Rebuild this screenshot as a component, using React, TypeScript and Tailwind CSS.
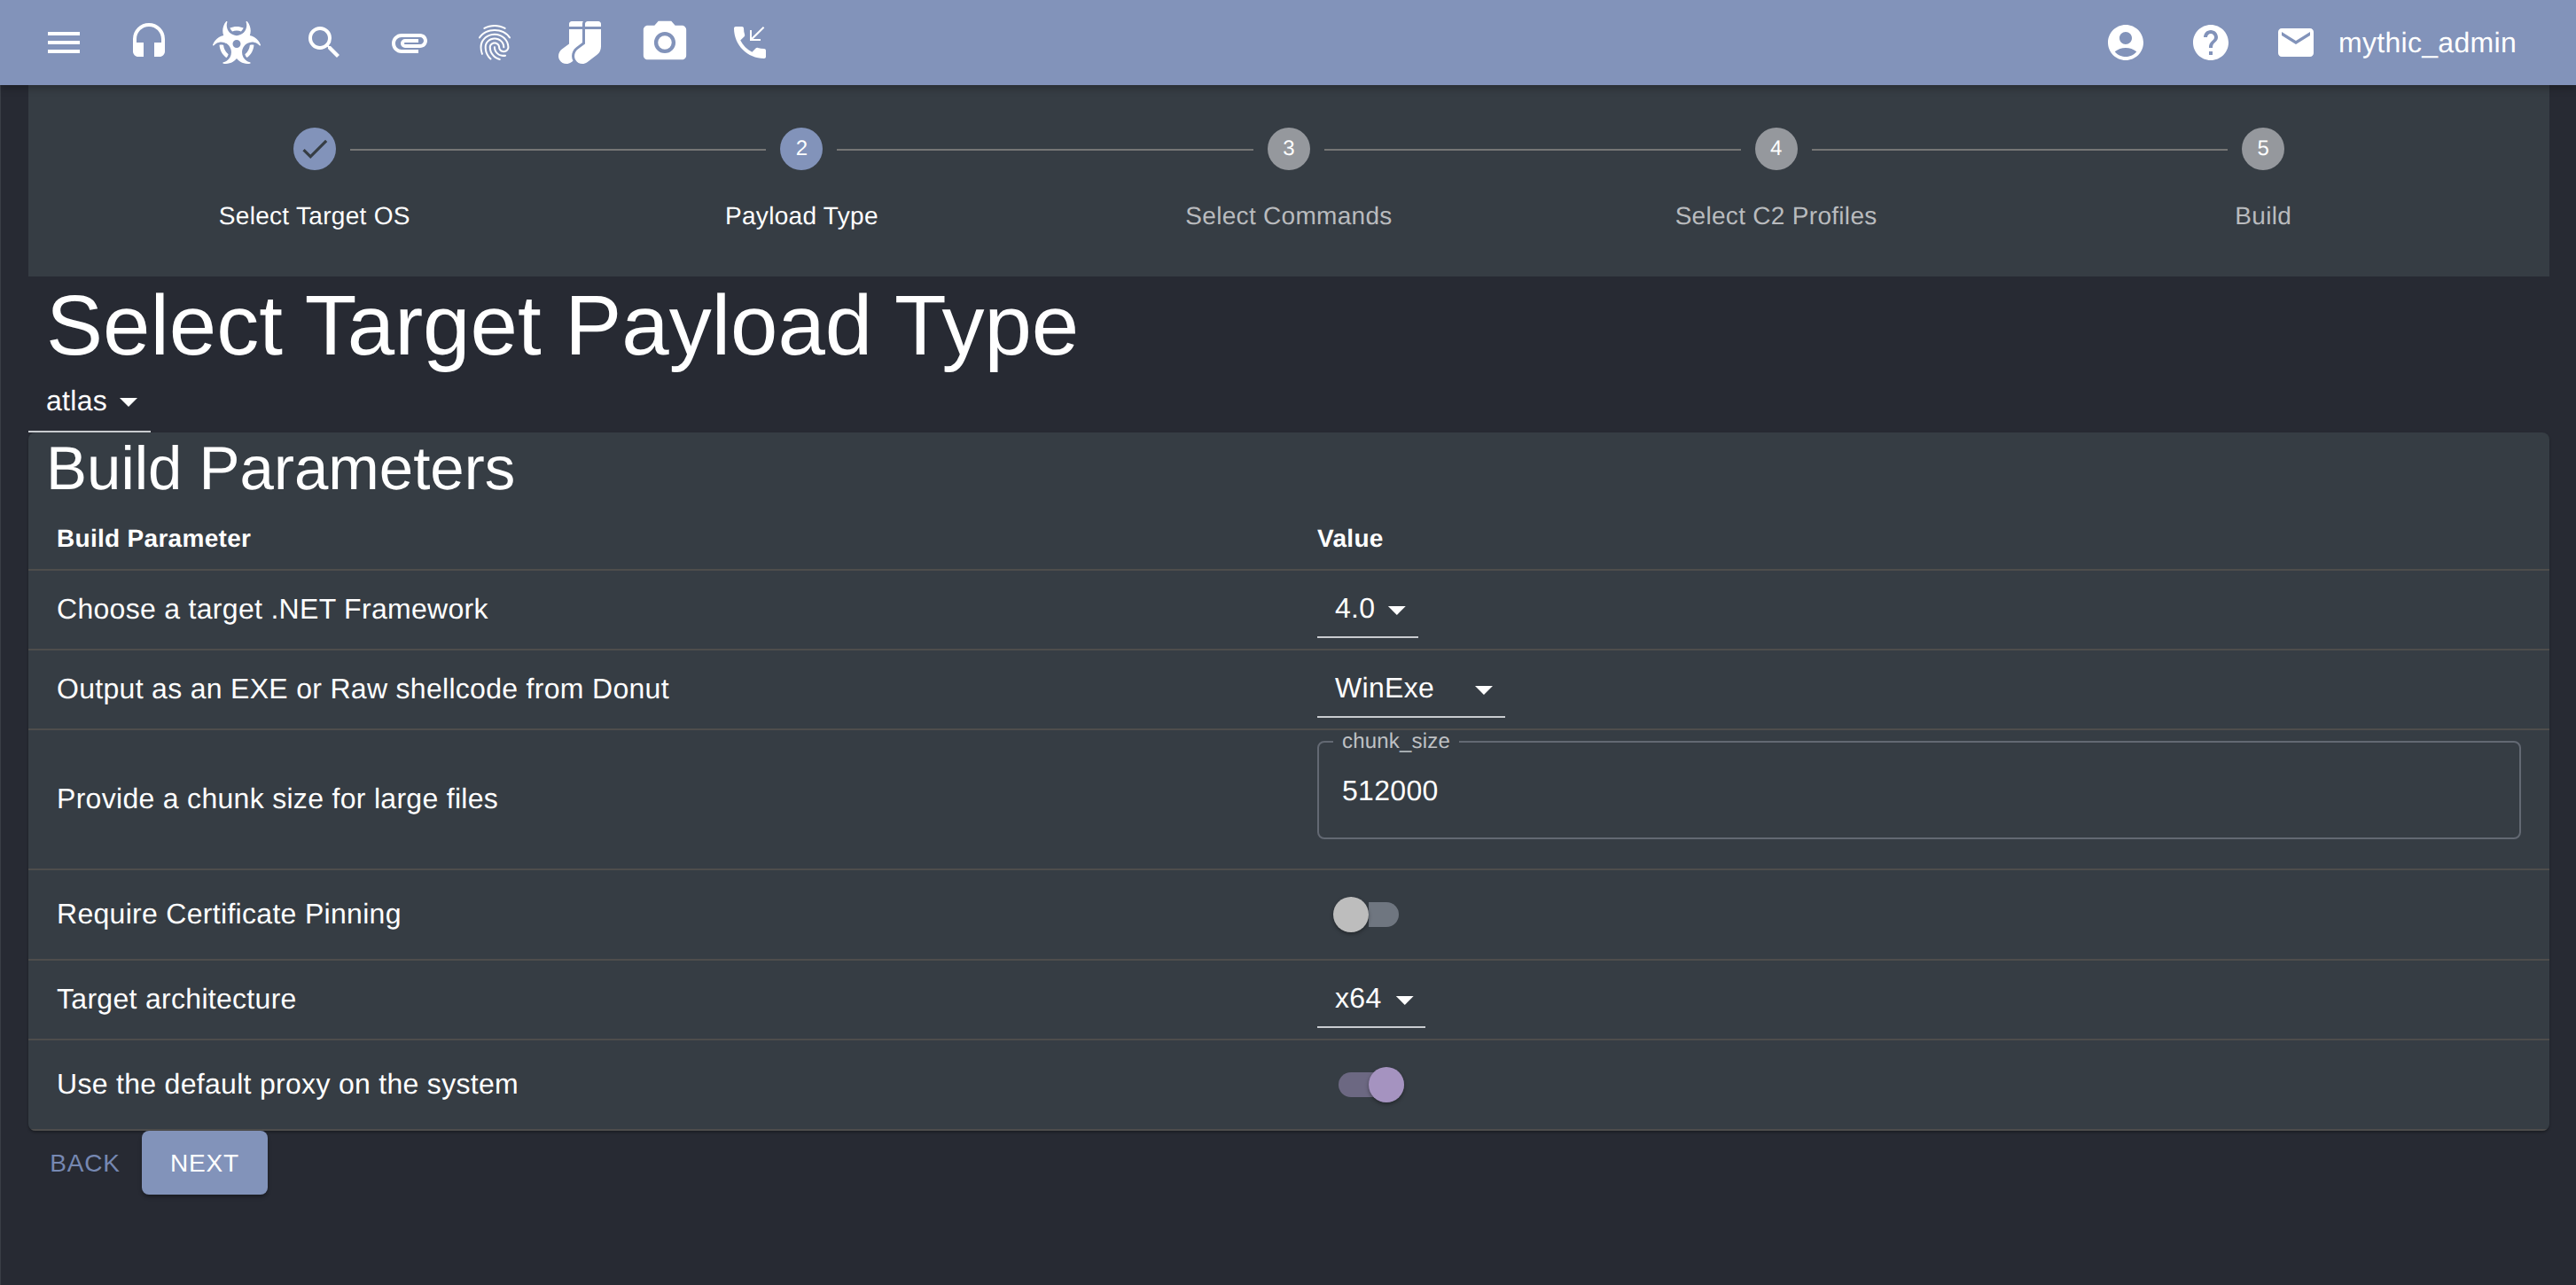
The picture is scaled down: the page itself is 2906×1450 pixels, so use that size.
import React from "react";
import { MdMenu, MdHeadset, MdSearch, MdAttachment, MdFingerprint, MdPhotoCamera, MdPhoneCallback, MdAccountCircle, MdHelp, MdMail, MdCheck, MdArrowDropDown } from "react-icons/md";
import { FaBiohazard, FaSocks } from "react-icons/fa";

const Step = ({ n, label, state, first, last }: { n: number; label: string; state: "done" | "active" | "todo"; first?: boolean; last?: boolean }) => (
  <div className="flex flex-col items-center">
    <div className="flex items-center w-full gap-4 h-12">
      <div className={`flex-1 h-[2px] mt-[2px] ${first ? "" : "bg-[#757575]"}`} />
      <div className={`w-12 h-12 rounded-full flex items-center justify-center text-[24px] text-white ${state === "todo" ? "bg-[#95989d]" : "bg-[#8293ba]"}`}>
        {state === "done" ? <MdCheck size={38} className="text-[#363d44]" /> : n}
      </div>
      <div className={`flex-1 h-[2px] mt-[2px] ${last ? "" : "bg-[#757575]"}`} />
    </div>
    <div className={`mt-[32px] text-[28px] leading-[40px] tracking-[0.3px] ${state === "todo" ? "text-[#b9bbbe]" : "text-white"}`}>{label}</div>
  </div>
);

const Select = ({ value, width, gap }: { value: string; width: string; gap: string }) => (
  <div className={`${width} h-[62px] mt-[2px] pb-[2px] border-b-2 border-[#c9ccd0] flex items-center pl-[20px] relative`}>
    <span className="text-[32px] tracking-[0.3px] text-white -mt-[2px]">{value}</span>
    <MdArrowDropDown size={48} className={`text-white ${gap} mt-[2px]`} />
  </div>
);

const Toggle = ({ on }: { on?: boolean }) => (
  <div className={`w-[80px] h-10 flex items-center ${on ? "ml-[24px]" : "ml-[18px]"}`}>
    {on ? (
      <>
        <div className="w-[74px] h-7 rounded-full bg-[#6c6882] -mr-[40px]" />
        <div className="w-10 h-10 rounded-full bg-[#a593c0] shadow-[0_2px_4px_rgba(0,0,0,0.35)] shrink-0 relative" />
      </>
    ) : (
      <>
        <div className="w-10 h-10 rounded-full bg-[#bdbdbd] shadow-[0_2px_4px_rgba(0,0,0,0.35)] shrink-0 relative z-10" />
        <div className="w-[34px] h-7 rounded-r-full bg-[#6f7680]" />
      </>
    )}
  </div>
);

const Row = ({ label, h, children }: { label: string; h: string; children: React.ReactNode }) => (
  <div className={`grid grid-cols-2 ${h} border-b-2 border-[#4e4d4c] items-center`}>
    <div className="pl-8 pb-[2px] text-[32px] tracking-[0.3px] text-white">{label}</div>
    <div className="pl-8">{children}</div>
  </div>
);

export default function App() {
  return (
    <div className="min-h-[1450px] bg-[#272a33] text-white font-['Liberation_Sans',Arial,sans-serif] [text-rendering:geometricPrecision] shadow-[inset_1px_0_0_#3a3e46]">
      <header className="relative z-10 h-[96px] bg-[#8293ba] shadow-[0_4px_8px_rgba(0,0,0,0.25)] flex items-center text-white">
        <div className="flex items-center pl-[48px]">
          <div className="w-[96px] shrink-0"><MdMenu size={48} /></div>
          <div className="w-[96px] shrink-0"><MdHeadset size={48} /></div>
          <div className="w-[102px] shrink-0"><FaBiohazard size={54} /></div>
          <div className="w-[96px] shrink-0"><MdSearch size={48} /></div>
          <div className="w-[96px] shrink-0"><MdAttachment size={48} /></div>
          <div className="w-[96px] shrink-0"><MdFingerprint size={48} /></div>
          <div className="w-[91px] shrink-0"><FaSocks size={48} /></div>
          <div className="w-[101px] shrink-0"><MdPhotoCamera size={58} /></div>
          <div className="w-[96px] shrink-0"><MdPhoneCallback size={48} /></div>
        </div>
        <div className="ml-auto flex items-center pr-[67px]">
          <div className="w-[96px]"><MdAccountCircle size={48} /></div>
          <div className="w-[96px]"><MdHelp size={48} /></div>
          <div className="w-[72px]"><MdMail size={48} /></div>
          <span className="text-[32px] tracking-[0.3px]">mythic_admin</span>
        </div>
      </header>

      <div className="ml-[32px] mr-[30px]">
        <section className="h-[216px] bg-[#363d44] px-[48px] pt-[48px] grid grid-cols-5">
          <Step n={1} label="Select Target OS" state="done" first />
          <Step n={2} label="Payload Type" state="active" />
          <Step n={3} label="Select Commands" state="todo" />
          <Step n={4} label="Select C2 Profiles" state="todo" />
          <Step n={5} label="Build" state="todo" last />
        </section>

        <h1 className="pl-[20px] h-[106px] text-[96px] leading-[112px] font-normal text-white">Select Target Payload Type</h1>
        <div className="w-[138px] h-[70px] border-b-2 border-[#c9ccd0] flex items-center pl-[20px]">
          <span className="text-[32px] tracking-[0.3px]">atlas</span>
          <MdArrowDropDown size={48} className="mt-[2px]" />
        </div>

        <section className="bg-[#363d44] rounded-[8px] shadow-[0_2px_3px_rgba(0,0,0,0.3)] overflow-hidden">
          <h2 className="pl-[20px] h-[74px] text-[69px] leading-[82px] font-normal text-white">Build Parameters</h2>
          <div className="grid grid-cols-2 h-[82px] pt-[11px] border-b-2 border-[#4e4d4c] items-center text-[28px] font-bold tracking-[0.3px] text-white">
            <div className="pl-8">Build Parameter</div>
            <div className="pl-8">Value</div>
          </div>
          <Row label="Choose a target .NET Framework" h="h-[90px]"><Select value="4.0" width="w-[114px]" gap="ml-[1px]" /></Row>
          <Row label="Output as an EXE or Raw shellcode from Donut" h="h-[90px]"><Select value="WinExe" width="w-[212px]" gap="ml-[32px]" /></Row>
          <Row label="Provide a chunk size for large files" h="h-[158px]">
            <div className="mr-[32px] -mt-[28px]">
              <fieldset className="h-[118px] border-2 border-[#636973] rounded-[8px] pl-[16px] pr-[14px]">
                <legend className="px-[10px] text-[24px] leading-[16px] tracking-[0.2px] text-[#bfc1c4]">chunk_size</legend>
                <div className="text-[32px] tracking-[0.3px] text-white pl-[10px] pt-[23px]">512000</div>
              </fieldset>
            </div>
          </Row>
          <Row label="Require Certificate Pinning" h="h-[102px]"><Toggle /></Row>
          <Row label="Target architecture" h="h-[90px]"><Select value="x64" width="w-[122px]" gap="ml-[2px]" /></Row>
          <Row label="Use the default proxy on the system" h="h-[102px]"><Toggle on /></Row>
        </section>

        <div className="flex items-start">
          <button className="w-[128px] h-[72px] pt-[2px] text-[28px] tracking-[0.8px] text-[#7688b2]">BACK</button>
          <button className="w-[142px] h-[72px] pt-[2px] rounded-[8px] bg-[#8293ba] text-[28px] tracking-[0.8px] text-white shadow-[0_3px_4px_rgba(0,0,0,0.3)]">NEXT</button>
        </div>
      </div>
    </div>
  );
}
